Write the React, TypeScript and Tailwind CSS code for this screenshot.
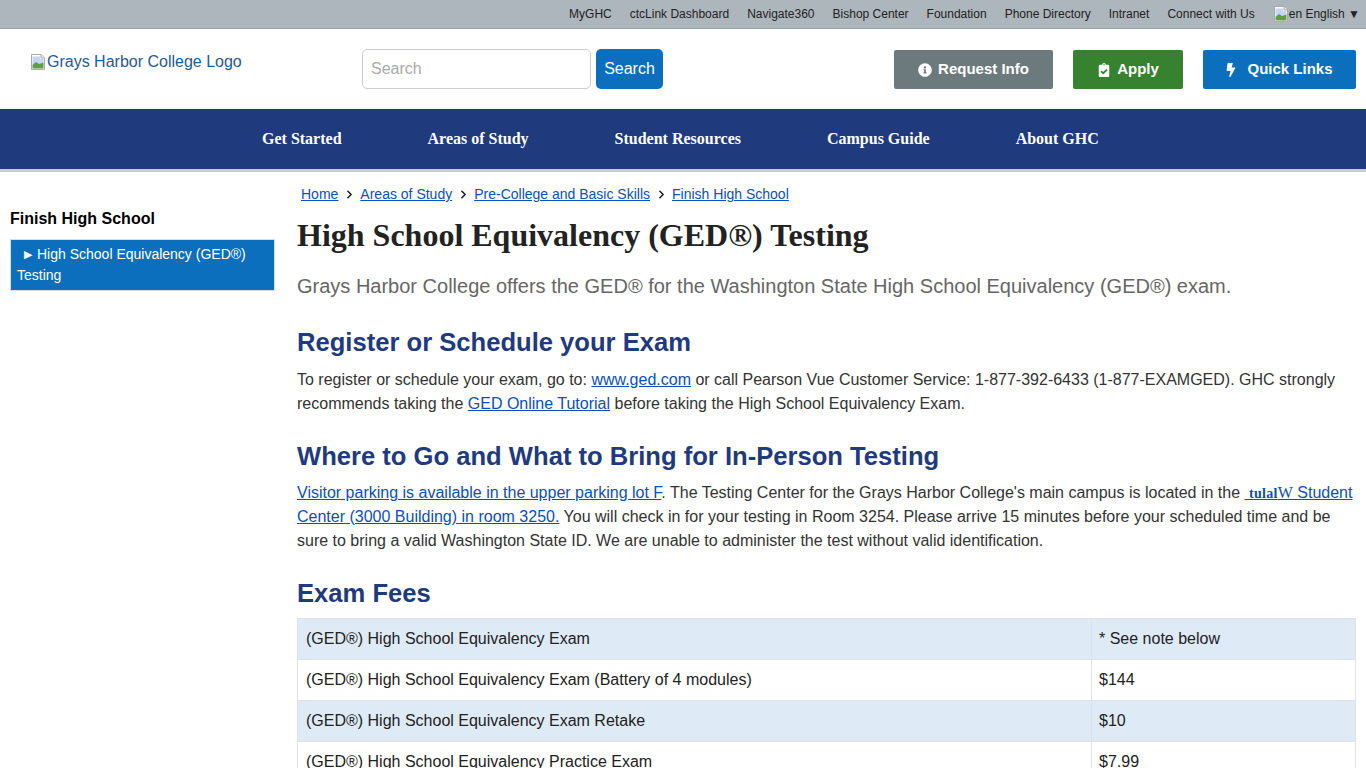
import { ChevronRight } from "lucide-react";
import { FaBolt, FaClipboardCheck, FaInfoCircle } from "react-icons/fa";

const topLinks = [
  "MyGHC",
  "ctcLink Dashboard",
  "Navigate360",
  "Bishop Center",
  "Foundation",
  "Phone Directory",
  "Intranet",
  "Connect with Us",
];

const navLinks = ["Get Started", "Areas of Study", "Student Resources", "Campus Guide", "About GHC"];

const crumbs = ["Home", "Areas of Study", "Pre-College and Basic Skills", "Finish High School"];

const fees = [
  ["(GED®) High School Equivalency Exam", "* See note below"],
  ["(GED®) High School Equivalency Exam (Battery of 4 modules)", "$144"],
  ["(GED®) High School Equivalency Exam Retake", "$10"],
  ["(GED®) High School Equivalency Practice Exam", "$7.99"],
];

const sans = "font-['Liberation_Sans',Arial,sans-serif]";
const serif = "font-['Liberation_Serif','Times_New_Roman',serif]";
const link = "text-[#0b4fbd] underline";

function BrokenImage() {
  return (
    <svg width="16" height="16" viewBox="0 0 16 16" className="shrink-0">
      <path d="M1.5 0.5H11L14.5 4V15.5H1.5Z" fill="#fff" stroke="#a9a9a9" />
      <path d="M11 0.5V4H14.5" fill="#e8e8e8" stroke="#a9a9a9" />
      <path d="M2.5 2.5H10V5H13.5V9L2.5 12Z" fill="#c6d6f5" />
      <path d="M2.5 14.5V11L6 8L9 10L13.5 8.5V14.5Z" fill="#5f9e44" />
    </svg>
  );
}

export default function App() {
  return (
    <div className={`${sans} h-[768px] overflow-hidden bg-white text-[#333]`}>
      {/* top utility bar */}
      <div className="h-[29px] bg-[#adb5bd] border-b border-[#9aa1a8] flex items-center justify-end pr-[6px] gap-[18px] text-[12px] text-[#222]">
        {topLinks.map((t) => (
          <span key={t}>{t}</span>
        ))}
        <span className="flex items-center">
          <BrokenImage />
          <span>en English ▼</span>
        </span>
      </div>

      {/* logo, search, buttons */}
      <div className="h-[80px] flex items-start pl-[30px] pr-[10px]">
        <div className="w-[332px] pt-[24px] flex items-center gap-[1px] text-[16px] leading-[18px] text-[#1f5a96]">
          <BrokenImage />
          <span>Grays Harbor College Logo</span>
        </div>
        <div className="flex gap-[5px] pt-[20px]">
          <input
            placeholder="Search"
            className="w-[229px] h-[40px] px-2 text-[16px] rounded-[5px] border border-[#ccc] outline-none placeholder:text-[#aaa]"
          />
          <button className="w-[67px] h-[40px] rounded-[5px] bg-[#0b6fbe] text-white text-[16px]">Search</button>
        </div>
        <div className="ml-auto flex gap-[20px] pt-[21px] text-[15px] font-bold text-white">
          <button className="w-[159px] h-[39px] rounded-[2px] bg-[#6c7a7d] flex items-center justify-center gap-[6px]">
            <FaInfoCircle size={14} />
            Request Info
          </button>
          <button className="w-[110px] h-[39px] rounded-[2px] bg-[#37822f] flex items-center justify-center gap-[6px]">
            <FaClipboardCheck size={14} />
            Apply
          </button>
          <button className="w-[153px] h-[39px] rounded-[2px] bg-[#0b6fbe] pr-[2px] flex items-center justify-center gap-[9px]">
            <FaBolt size={14} />
            Quick Links
          </button>
        </div>
      </div>

      {/* main nav */}
      <div className={`${serif} h-[63px] bg-[#1f3a7d] border-b-[3px] border-[#c9ced6] flex items-center pl-[262px] gap-[86px] text-[16px] font-bold text-white`}>
        {navLinks.map((n) => (
          <span key={n}>{n}</span>
        ))}
      </div>

      <div className="flex pl-[10px] pr-[10px]">
        {/* side menu */}
        <aside className="w-[265px] shrink-0 pt-[37px]">
          <div className="text-[16px] leading-[20px] font-bold text-black">Finish High School</div>
          <div className="mt-[10px] h-[52px] bg-[#0b6fbe] border border-[#d5dde5] px-[6px] py-[4px] text-[14px] leading-[21px] text-white">
            <span className="text-[11px] pl-[7px] pr-[5px] align-[1px]">▶</span>
            High School Equivalency (GED®) Testing
          </div>
        </aside>

        <main className="flex-1 ml-[22px]">
          <div className="pt-[12px] pl-[4px] flex items-center text-[14px] leading-[20px]">
            {crumbs.map((c, i) => (
              <span key={c} className="flex items-center">
                {i > 0 && <ChevronRight size={13} strokeWidth={3} className="mx-[4.5px] text-[#222]" />}
                <span className={link}>{c}</span>
              </span>
            ))}
          </div>

          <h1 className={`${serif} mt-[11px] text-[32px] leading-[40px] font-bold text-[#222]`}>
            High School Equivalency (GED®) Testing
          </h1>
          <p className="mt-[17px] text-[20px] leading-[28px] text-[#666]">
            Grays Harbor College offers the GED® for the Washington State High School Equivalency (GED®) exam.
          </p>

          <h2 className="mt-[26px] text-[25.6px] leading-[32px] font-bold text-[#1f3a7d]">Register or Schedule your Exam</h2>
          <p className="mt-[10px] text-[16px] leading-[24px]">
            To register or schedule your exam, go to: <span className={link}>www.ged.com</span> or call Pearson Vue Customer
            Service: 1-877-392-6433 (1-877-EXAMGED). GHC strongly recommends taking the{" "}
            <span className={link}>GED Online Tutorial</span> before taking the High School Equivalency Exam.
          </p>

          <h2 className="mt-[24px] text-[25.6px] leading-[32px] font-bold text-[#1f3a7d]">
            Where to Go and What to Bring for In-Person Testing
          </h2>
          <p className="mt-[9px] text-[16px] leading-[24px]">
            <span className={link}>Visitor parking is available in the upper parking lot F</span>. The Testing Center for the
            Grays Harbor College's main campus is located in the{" "}
            <span className={link}>
              {"\u00a0"}
              <span className={`${serif} text-[14px] leading-none font-bold tracking-[0.3px]`}>tulal</span>
              <span className={`${serif} leading-none`}>W</span> Student Center (3000 Building) in room 3250.
            </span>{" "}
            You will check in for your testing in Room 3254. Please arrive 15 minutes before your scheduled time and be sure to
            bring a valid Washington State ID. We are unable to administer the test without valid identification.
          </p>

          <h2 className="mt-[24px] text-[25.6px] leading-[32px] font-bold text-[#1f3a7d]">Exam Fees</h2>
          <table className="mt-[9px] w-full border-collapse text-[16px] leading-[24px] text-[#222]">
            <tbody>
              {fees.map(([name, price], i) => (
                <tr key={name} className={i % 2 === 0 ? "bg-[#deeaf6]" : "bg-white"}>
                  <td className="w-[794px] h-[41px] px-[8px] border border-[#dee2e6]">{name}</td>
                  <td className="h-[41px] pl-[7px] pr-[8px] border border-[#dee2e6]">{price}</td>
                </tr>
              ))}
            </tbody>
          </table>
        </main>
      </div>
    </div>
  );
}
